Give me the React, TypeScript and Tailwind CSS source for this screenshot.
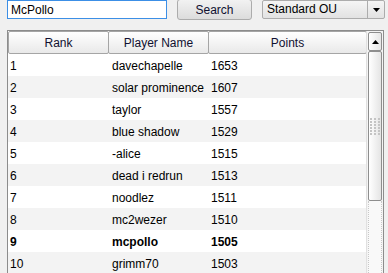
const ROWS = [
  { rank: 1, name: "davechapelle", points: 1653 },
  { rank: 2, name: "solar prominence", points: 1607 },
  { rank: 3, name: "taylor", points: 1557 },
  { rank: 4, name: "blue shadow", points: 1529 },
  { rank: 5, name: "-alice", points: 1515 },
  { rank: 6, name: "dead i redrun", points: 1513 },
  { rank: 7, name: "noodlez", points: 1511 },
  { rank: 8, name: "mc2wezer", points: 1510 },
  { rank: 9, name: "mcpollo", points: 1505, me: true },
  { rank: 10, name: "grimm70", points: 1503 },
];

function HeaderCell({ label, width }: { label: string; width: string }) {
  return (
    <div
      className={`${width} h-full flex items-center justify-center border border-[#a5a5a5] rounded-[2px] bg-gradient-to-b from-white to-[#e9e9e9] text-[#101030] -mr-px`}
    >
      {label}
    </div>
  );
}

function Scrollbar() {
  return (
    <div className="w-[17px] flex flex-col bg-[#f4f4f4] border-l border-[#e0e0e0]">
      <div className="h-[19px] mx-px mt-px flex items-center justify-center border border-[#8e8e8e] rounded-[2px] bg-gradient-to-r from-white to-[#e6e6e6]">
        <svg width="7" height="4" viewBox="0 0 7 4">
          <path d="M0 4 L3.5 0 L7 4 Z" fill="#000" />
        </svg>
      </div>
      <div className="h-[150px] mx-px flex items-center justify-center border border-[#8e8e8e] rounded-[2px] bg-gradient-to-r from-white to-[#e4e4e4]">
        <div className="grid grid-cols-3 gap-x-[2px] gap-y-px">
          {Array.from({ length: 18 }).map((_, i) => (
            <div key={i} className="w-[2px] h-[2px] bg-[#c4c4c4]" />
          ))}
        </div>
      </div>
      <div className="flex-1 mx-px border-x border-dotted border-[#c8c8c8] bg-[#f9f9f9]" />
    </div>
  );
}

export default function App() {
  return (
    <div
      className="w-[388px] h-[273px] overflow-hidden bg-[#f0f0f0] text-[12px] text-black"
      style={{ fontFamily: '"Liberation Sans", Arial, sans-serif' }}
    >
      <div className="flex items-start h-[20px]">
        <input
          readOnly
          value="McPollo"
          className="ml-[7px] w-[160px] h-[19px] px-[3px] border border-[#3c8fe6] bg-white outline-none text-[12px]"
        />
        <button className="ml-[10px] w-[75px] h-[21px] -mt-[1px] border border-[#acacac] rounded-[3px] bg-gradient-to-b from-[#f2f2f2] to-[#dcdcdc] text-[#101030]">
          Search
        </button>
        <div className="ml-[10px] w-[123px] h-[19px] flex border border-[#acacac] rounded-[2px] bg-gradient-to-b from-[#f5f5f5] to-[#e2e2e2]">
          <div className="flex-1 pl-[4px] leading-[16px]">Standard OU</div>
          <div className="w-[17px] border-l border-[#acacac] flex items-center justify-center">
            <svg width="7" height="4" viewBox="0 0 7 4">
              <path d="M0 0 L7 0 L3.5 4 Z" fill="#000" />
            </svg>
          </div>
        </div>
      </div>

      <div className="mt-[10px] ml-[7px] w-[377px] h-[260px] flex border border-[#8c8c8c] bg-white">
        <div className="flex-1 flex flex-col">
          <div className="h-[23px] flex shrink-0">
            <HeaderCell label="Rank" width="w-[101px]" />
            <HeaderCell label="Player Name" width="w-[101px]" />
            <HeaderCell label="Points" width="flex-1" />
          </div>
          {ROWS.map((r, i) => (
            <div
              key={r.rank}
              className={`h-[22px] flex items-center pt-px shrink-0 ${i % 2 ? "bg-[#f3f3f3]" : "bg-white"} ${r.me ? "font-bold" : ""}`}
            >
              <div className="w-[100px] pl-[2px]">{r.rank}</div>
              <div className="w-[100px] pl-[4px] whitespace-nowrap">{r.name}</div>
              <div className="flex-1 pl-[3px]">{r.points}</div>
            </div>
          ))}
        </div>
        <Scrollbar />
      </div>
    </div>
  );
}
